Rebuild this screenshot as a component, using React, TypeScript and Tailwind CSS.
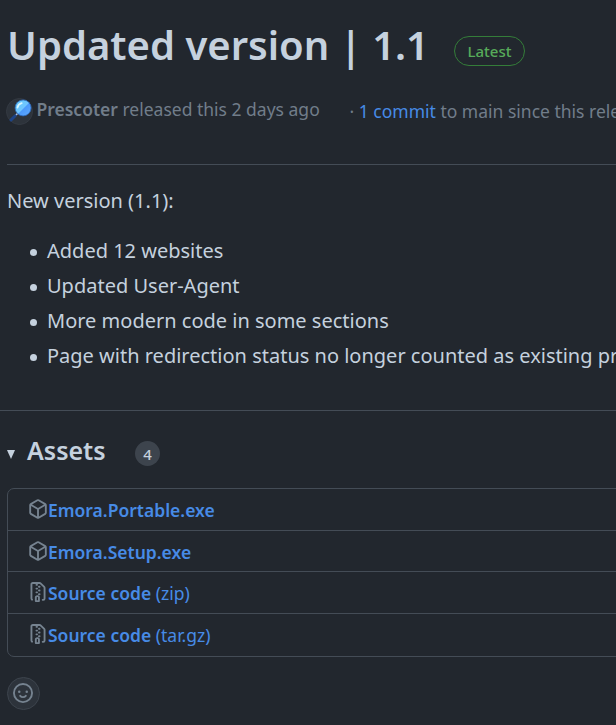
import type { ReactNode } from "react";

const PACKAGE =
  "m8.878.392 5.25 3.045c.54.314.872.89.872 1.514v6.098a1.75 1.75 0 0 1-.872 1.514l-5.25 3.045a1.75 1.75 0 0 1-1.756 0l-5.25-3.045A1.75 1.75 0 0 1 1 11.049V4.951c0-.624.332-1.201.872-1.514L7.122.392a1.75 1.75 0 0 1 1.756 0ZM7.875 1.69l-4.63 2.685L8 7.133l4.755-2.758-4.63-2.685a.248.248 0 0 0-.25 0ZM2.5 5.677v5.372c0 .09.047.171.125.216l4.625 2.683V8.432Zm6.25 8.271 4.625-2.683a.25.25 0 0 0 .125-.216V5.677L8.75 8.432Z";
const FILE_ZIP =
  "M3.5 1.75v11.5c0 .09.048.173.126.217a.75.75 0 0 1-.752 1.298A1.748 1.748 0 0 1 2 13.25V1.75C2 .784 2.784 0 3.75 0h5.586c.464 0 .909.185 1.237.513l2.914 2.914c.329.328.513.773.513 1.237v8.586A1.75 1.75 0 0 1 12.25 15h-.5a.75.75 0 0 1 0-1.5h.5a.25.25 0 0 0 .25-.25V4.664a.25.25 0 0 0-.073-.177L9.513 1.573a.25.25 0 0 0-.177-.073H7.25a.75.75 0 0 1 0 1.5h-.5a.75.75 0 0 1 0-1.5h-3a.25.25 0 0 0-.25.25Zm3.75 8.75h.5c.966 0 1.75.784 1.75 1.75v3a.75.75 0 0 1-.75.75h-2.5a.75.75 0 0 1-.75-.75v-3c0-.966.784-1.75 1.75-1.75ZM6 5.25a.75.75 0 0 1 .75-.75h.5a.75.75 0 0 1 0 1.5h-.5A.75.75 0 0 1 6 5.25Zm.75 2.25h.5a.75.75 0 0 1 0 1.5h-.5a.75.75 0 0 1 0-1.5ZM8 6.75A.75.75 0 0 1 8.75 6h.5a.75.75 0 0 1 0 1.5h-.5A.75.75 0 0 1 8 6.75ZM8.75 3h.5a.75.75 0 0 1 0 1.5h-.5a.75.75 0 0 1 0-1.5ZM8 9.75A.75.75 0 0 1 8.75 9h.5a.75.75 0 0 1 0 1.5h-.5A.75.75 0 0 1 8 9.75Zm-1 2.5v2.25h1v-2.25a.25.25 0 0 0-.25-.25h-.5a.25.25 0 0 0-.25.25Z";

function Octicon({ d }: { d: string }) {
  return (
    <svg viewBox="0 0 16 16" className="size-5 shrink-0 fill-[#768390]">
      <path d={d} />
    </svg>
  );
}

function Avatar() {
  return (
    <svg viewBox="0 0 27 27" className="mt-[2px] size-[27px] shrink-0">
      <defs>
        <linearGradient id="lens" x1="0" y1="0" x2="1" y2="1">
          <stop offset="0" stopColor="#62c8fa" />
          <stop offset="0.52" stopColor="#70c6ff" />
          <stop offset="0.54" stopColor="#4b98fa" />
          <stop offset="1" stopColor="#62adff" />
        </linearGradient>
      </defs>
      <circle cx="13.5" cy="13.5" r="13" fill="#2d333b" stroke="#343a43" />
      <path d="M11.5 15.5 9 18" stroke="#b8cce8" strokeWidth="1.5" />
      <path d="m9.2 17.8-4.2 4.2" stroke="#1d4488" strokeWidth="3" strokeLinecap="round" />
      <circle cx="17.1" cy="9.9" r="8" fill="url(#lens)" stroke="#2c68bb" strokeWidth="0.8" />
      <path d="M11.5 9.5c.5-2.4 2-3.8 4.2-4.3" fill="none" stroke="#d8f5ff" strokeWidth="1.8" strokeLinecap="round" />
    </svg>
  );
}

function Asset({ icon, name, kind, className }: { icon: string; name: string; kind?: string; className: string }) {
  return (
    <li className={`flex items-start border-[#444c56] pt-[10px] pl-5 ${className}`}>
      <Octicon d={icon} />
      <a className="-mt-[2px] leading-[26px] text-[#478be6]">
        <span className="font-semibold">{name}</span>
        {kind && <span> {kind}</span>}
      </a>
    </li>
  );
}

function Bullet({ children }: { children: ReactNode }) {
  return (
    <li className="flex items-center">
      <span className="mt-[2px] mr-[10px] size-[7px] shrink-0 rounded-full bg-[#c5d1de]" />
      {children}
    </li>
  );
}

export default function App() {
  return (
    <main className="h-[725px] w-[616px] overflow-hidden bg-[#22272e] pt-5 font-['Noto_Sans',sans-serif] text-xl whitespace-nowrap text-[#c5d1de]">
      <header className="ml-[7px] flex h-[50px] items-start">
        <h1 className="w-[447px] text-[40px] leading-[50px] font-semibold">Updated version | 1.1</h1>
        <span className="mt-4 flex h-[30px] w-[71px] items-center justify-center rounded-full border border-[#347d39] text-[15px] font-medium text-[#57ab5a]">
          Latest
        </span>
      </header>

      <div className="mt-[26px] flex h-[30px] items-start pl-[6px] text-[17.5px] leading-[26px] text-[#717d8a]">
        <Avatar />
        <p className="ml-[3.5px] w-[313px] shrink-0">
          <b className="font-semibold">Prescoter</b> released this 2 days ago
        </p>
        <p className="mt-[2px] shrink-0">
          · <a className="text-[#478be6]">1 commit</a> to main since this release
        </p>
      </div>

      <hr className="mt-[38px] ml-[7px] border-[#444c56]" />

      <section className="pl-[7px] leading-[30px]">
        <p className="mt-[21px]">New version (1.1):</p>
        <ul className="mt-5 flex flex-col gap-[5px] pl-[23px]">
          <Bullet>Added 12 websites</Bullet>
          <Bullet>Updated User-Agent</Bullet>
          <Bullet>More modern code in some sections</Bullet>
          <Bullet>Page with redirection status no longer counted as existing profile</Bullet>
        </ul>
      </section>

      <hr className="mt-[39px] border-[#444c56]" />

      <section className="pl-[7px]">
        <div className="mt-5 flex h-[38px] items-start">
          <svg viewBox="0 0 8 9" className="mt-[19px] h-[9px] w-2 fill-[#c5d1de]">
            <path d="M0 0h8L4 9Z" />
          </svg>
          <h2 className="ml-3 w-[108px] text-[25px] leading-[38px] font-semibold">Assets</h2>
          <span className="mt-[10px] flex size-[25px] items-center justify-center rounded-full bg-[#3d444d] pt-[2px] text-[15px] leading-none font-medium">
            4
          </span>
        </div>
        <ul className="mt-[19px] h-[169px] w-[640px] rounded-[7px] border border-[#444c56] text-[17.5px]">
          <Asset icon={PACKAGE} name="Emora.Portable.exe" className="h-[42px] border-b" />
          <Asset icon={PACKAGE} name="Emora.Setup.exe" className="h-[41px] border-b" />
          <Asset icon={FILE_ZIP} name="Source code" kind="(zip)" className="h-[42px] border-b" />
          <Asset icon={FILE_ZIP} name="Source code" kind="(tar.gz)" className="h-[42px]" />
        </ul>
        <button className="mt-5 flex size-[33px] items-start rounded-full border border-[#3d444d] bg-[#2d333b] pt-[5px] pl-[5px]">
          <svg viewBox="0 0 16 16" className="size-5 fill-none stroke-[#768390] stroke-[1.5]">
            <circle cx="8" cy="8" r="7.25" />
            <path d="M5.75 10.25Q6.6 11.25 8 11.25t2.25-1" strokeLinecap="round" />
            <circle cx="5" cy="7" r="1" className="fill-[#768390] stroke-none" />
            <circle cx="11" cy="7" r="1" className="fill-[#768390] stroke-none" />
          </svg>
        </button>
      </section>
    </main>
  );
}
